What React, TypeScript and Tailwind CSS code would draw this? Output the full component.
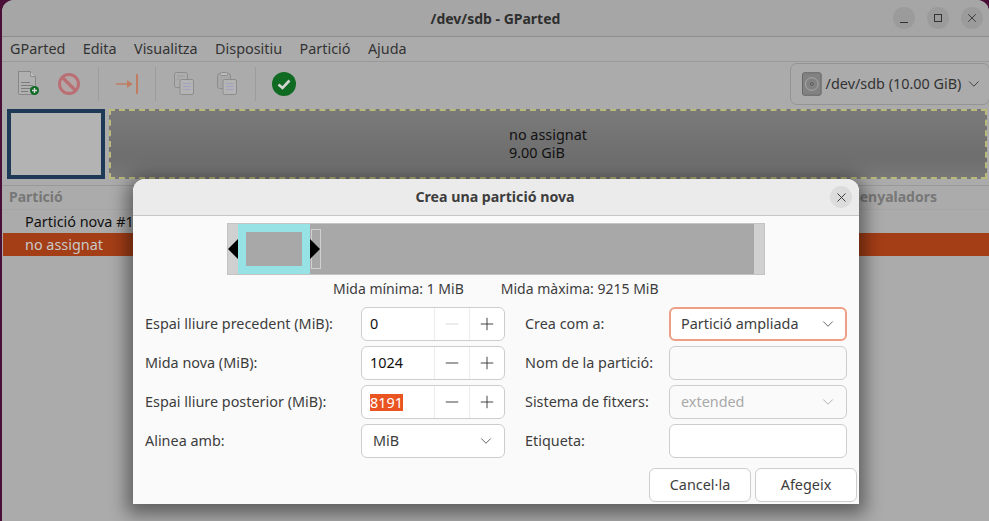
import { ChevronDown, Minus, Plus, X } from "lucide-react";

const font = { fontFamily: '"Noto Sans", sans-serif' };

function NewIcon() {
  return (
    <svg width="23" height="25" viewBox="0 0 23 25" fill="none">
      <path d="M1.5 0.5h12l5 5v17a1 1 0 0 1-1 1h-15a1 1 0 0 1-1-1v-21a1 1 0 0 1 1-1z" fill="#b0b0b0" stroke="#868686" />
      <path d="M13.5 0.5v5h5" fill="#c0c0c0" stroke="#8e8e8e" />
      <path d="M4 11.5h9M4 14.5h12M4 17.5h10M4 20.5h7" stroke="#7c7c7c" />
      <circle cx="17.5" cy="19.5" r="4.5" fill="#0f6b26" />
      <path d="M17.5 17v5M15 19.5h5" stroke="#d8d8d8" strokeWidth="1.4" />
    </svg>
  );
}

function StopIcon() {
  return (
    <svg width="22" height="22" viewBox="0 0 22 22" fill="none">
      <circle cx="11" cy="11" r="9.5" fill="#b3a6a6" stroke="#b96f73" strokeWidth="3" />
      <path d="M4.5 4.5l13 13" stroke="#b96f73" strokeWidth="3.2" />
    </svg>
  );
}

function MoveIcon() {
  return (
    <svg width="22" height="24" viewBox="0 0 22 24" fill="none">
      <path d="M0 12h16" stroke="#bf7d62" strokeWidth="1.6" />
      <path d="M11 8l5.5 4-5.5 4z" fill="#bf7d62" />
      <path d="M21 2v20" stroke="#bf7d62" strokeWidth="2" />
    </svg>
  );
}

function CopyIcon() {
  return (
    <svg width="20" height="23" viewBox="0 0 20 23" fill="none">
      <rect x="0.5" y="0.5" width="13" height="15" rx="2" fill="#adadad" stroke="#8c8c8c" />
      <path d="M3 4h8M3 7h3" stroke="#9a9a9a" />
      <rect x="6" y="7.5" width="13.5" height="15" rx="1.5" fill="#b4b4b4" stroke="#8c8c8c" />
      <path d="M9 11.5h8M9 14.5h8M9 17.5h8" stroke="#a0a0c0" />
    </svg>
  );
}

function PasteIcon() {
  return (
    <svg width="20" height="23" viewBox="0 0 20 23" fill="none">
      <rect x="0.5" y="1.5" width="13" height="15" rx="2" fill="#a8a8a8" stroke="#8c8c8c" />
      <rect x="3.5" y="0.5" width="7" height="3" rx="1" fill="#bcbcbc" stroke="#8c8c8c" />
      <rect x="6" y="7.5" width="13.5" height="15" rx="1.5" fill="#b4b4b4" stroke="#8c8c8c" />
      <path d="M9 11.5h8M9 14.5h8M9 17.5h8" stroke="#a0a0c0" />
    </svg>
  );
}

function ApplyIcon() {
  return (
    <svg width="24" height="24" viewBox="0 0 24 24" fill="none">
      <circle cx="12" cy="12" r="12" fill="#0f6a22" />
      <path d="M6.5 12.5l4 3.5 7-7.5" stroke="#d4d4d4" strokeWidth="2.6" />
    </svg>
  );
}

function DiskIcon() {
  return (
    <svg width="20" height="24" viewBox="0 0 20 24" fill="none">
      <rect x="0.5" y="0.5" width="19" height="23" rx="2" fill="#828282" stroke="#666" />
      <circle cx="10" cy="12" r="6.5" stroke="#a8a8a8" />
      <circle cx="10" cy="12" r="1.5" stroke="#5c5c5c" />
    </svg>
  );
}

function Sep() {
  return <div className="h-[34px] w-px bg-[#9c9c9c]" />;
}

function Spin({ value, selected, minusOff }: { value: string; selected?: boolean; minusOff?: boolean }) {
  return (
    <div className="flex h-[34px] w-[144px] items-stretch rounded-[6px] border border-[#cdcdcd] bg-white text-[#111]">
      <div className="flex flex-1 items-center pl-2">
        {selected ? <span className="bg-[#e95420] leading-[17px] text-white">{value}</span> : <span>{value}</span>}
      </div>
      <div className="flex w-[35px] items-center justify-center border-l border-[#ececec]">
        <Minus size={20} strokeWidth={1.1} className={minusOff ? "text-[#d4d4d4]" : "text-[#333]"} />
      </div>
      <div className="flex w-[35px] items-center justify-center border-l border-[#ececec]">
        <Plus size={20} strokeWidth={1.1} className="text-[#333]" />
      </div>
    </div>
  );
}

function Row({ label, children }: { label: string; children: React.ReactNode }) {
  return (
    <div className="flex h-[34px] items-center justify-between">
      <span className="text-[#3d3d3d]">{label}</span>
      {children}
    </div>
  );
}

function Picker({ text, focus, off, narrow }: { text: string; focus?: boolean; off?: boolean; narrow?: boolean }) {
  return (
    <div
      className={
        focus
          ? "flex h-[34px] w-[178px] items-center justify-between rounded-[6px] border-2 border-[#ee9e84] bg-white pl-[10px] pr-[8px] text-[#3d3d3d]"
          : off
            ? "flex h-[34px] w-[178px] items-center justify-between rounded-[6px] border border-[#cdcdcd] bg-[#fafafa] pl-[11px] pr-[9px] text-[#a9a9a9]"
            : narrow
              ? "flex h-[34px] w-[144px] items-center justify-between rounded-[6px] border border-[#cdcdcd] bg-white pl-[11px] pr-[9px] text-[#3d3d3d]"
              : "flex h-[34px] w-[178px] items-center justify-between rounded-[6px] border border-[#cdcdcd] bg-white pl-[11px] pr-[9px] text-[#3d3d3d]"
      }
    >
      {text}
      <ChevronDown size={18} strokeWidth={1.2} className={off ? "text-[#a9a9a9]" : "text-[#555]"} />
    </div>
  );
}

function Empty({ off }: { off?: boolean }) {
  return (
    <div
      className={
        off
          ? "h-[34px] w-[178px] rounded-[6px] border border-[#cdcdcd] bg-[#fafafa]"
          : "h-[34px] w-[178px] rounded-[6px] border border-[#cdcdcd] bg-white"
      }
    />
  );
}

function Dialog() {
  return (
    <div className="absolute left-[133px] top-[179px] flex h-[325px] w-[726px] flex-col overflow-hidden rounded-t-[12px] bg-[#fafafa] shadow-[0_4px_18px_6px_rgba(0,0,0,0.45)]">
      <div className="relative flex h-[37px] shrink-0 items-center justify-center border-b border-[#c6c6c6] bg-[#ebebeb]">
        <span className="ml-[-2px] text-[14.2px] font-bold text-[#3d3d3d]">Crea una partició nova</span>
        <div className="absolute right-[7px] top-[7px] flex h-[22px] w-[22px] items-center justify-center rounded-full bg-[#dcdcdc]">
          <X size={15} strokeWidth={1.5} className="text-[#333]" />
        </div>
      </div>
      <div className="pl-[94px] pt-[7px]">
        <svg width="538" height="52" viewBox="0 0 538 52">
          <rect x="0.5" y="0.5" width="537" height="51" fill="#d0d0d0" stroke="#c4c4c4" />
          <rect x="11" y="1" width="516" height="50" fill="#a8a8a8" />
          <rect x="11" y="1" width="72" height="50" fill="#97e2e4" />
          <rect x="19" y="9" width="56" height="34" fill="#a8a8a8" />
          <rect x="84.5" y="6.5" width="9" height="39" fill="none" stroke="#d0d0d0" />
          <path d="M1 26l10-10v20zM83 16l10 10-10 10z" fill="#000" />
        </svg>
      </div>
      <div className="flex h-[24px] items-end pl-[200px] text-[14px] text-[#3d3d3d]">
        <span>Mida mínima: 1 MiB</span>
        <span className="ml-[37px]">Mida màxima: 9215 MiB</span>
      </div>
      <div className="mt-[8px] flex pl-[12px] pr-[12px]">
        <div className="flex w-[360px] flex-col gap-[5px]">
          <Row label="Espai lliure precedent (MiB):">
            <Spin value="0" minusOff />
          </Row>
          <Row label="Mida nova (MiB):">
            <Spin value="1024" />
          </Row>
          <Row label="Espai lliure posterior (MiB):">
            <Spin value="8191" selected />
          </Row>
          <Row label="Alinea amb:">
            <Picker text="MiB" narrow />
          </Row>
        </div>
        <div className="ml-[20px] flex w-[322px] flex-col gap-[5px]">
          <Row label="Crea com a:">
            <Picker text="Partició ampliada" focus />
          </Row>
          <Row label="Nom de la partició:">
            <Empty off />
          </Row>
          <Row label="Sistema de fitxers:">
            <Picker text="extended" off />
          </Row>
          <Row label="Etiqueta:">
            <Empty />
          </Row>
        </div>
      </div>
      <div className="mt-[10px] flex justify-end gap-1 pr-[2px] text-[#3d3d3d]">
        <div className="flex h-[34px] w-[102px] items-center justify-center rounded-[6px] border border-[#cdcdcd] bg-white">Cancel·la</div>
        <div className="flex h-[34px] w-[102px] items-center justify-center rounded-[6px] border border-[#cdcdcd] bg-white">Afegeix</div>
      </div>
    </div>
  );
}

export default function App() {
  return (
    <div className="relative h-[521px] w-[989px] overflow-hidden bg-[#4a0f36] text-[14.4px]" style={font}>
      <div className="ml-[2px] flex h-[521px] w-[987px] flex-col overflow-hidden rounded-t-[12px] bg-[#ababab] text-[#333]">
        <div className="relative flex h-[37px] shrink-0 items-center justify-center border-b border-[#8d8d8d] bg-[#a6a6a6]">
          <span className="text-[14px] font-bold text-[#2e2e2e]">/dev/sdb - GParted</span>
          <div className="absolute right-[6px] top-[7px] flex gap-[12px]">
            <div className="flex h-[22px] w-[22px] items-center justify-center rounded-full bg-[#9b9b9b]">
              <div className="mt-[8px] h-px w-[8px] bg-[#333]" />
            </div>
            <div className="flex h-[22px] w-[22px] items-center justify-center rounded-full bg-[#9b9b9b]">
              <div className="h-[8px] w-[8px] border border-[#333]" />
            </div>
            <div className="flex h-[22px] w-[22px] items-center justify-center rounded-full bg-[#9b9b9b]">
              <X size={14} strokeWidth={1.5} />
            </div>
          </div>
        </div>
        <div className="flex h-[25px] shrink-0 items-center gap-[17.4px] border-b border-[#9a9a9a] pl-[8px]">
          <span>GParted</span>
          <span>Edita</span>
          <span>Visualitza</span>
          <span>Dispositiu</span>
          <span>Partició</span>
          <span>Ajuda</span>
        </div>
        <div className="flex h-[47px] shrink-0 items-center pb-[4px] pl-[15px]">
          <NewIcon />
          <div className="ml-[18px] flex">
            <StopIcon />
          </div>
          <div className="ml-[18px]">
            <Sep />
          </div>
          <div className="ml-[17px] flex">
            <MoveIcon />
          </div>
          <div className="ml-[17px]">
            <Sep />
          </div>
          <div className="ml-[18px] flex gap-[23px]">
            <CopyIcon />
            <PasteIcon />
          </div>
          <div className="ml-[18px]">
            <Sep />
          </div>
          <div className="ml-[16px] flex">
            <ApplyIcon />
          </div>
          <div className="ml-auto mr-[-1px] flex h-[42px] w-[200px] items-center gap-1 rounded-[7px] border border-[#949494] pl-[11px] pr-[6px]">
            <DiskIcon />
            <span className="whitespace-nowrap">/dev/sdb (10.00 GiB)</span>
            <ChevronDown size={18} strokeWidth={1.2} className="ml-auto" />
          </div>
        </div>
        <div className="flex h-[70px] shrink-0 gap-[4px] pl-[5px] pr-[2px]">
          <div className="h-[70px] w-[98px] border-[4px] border-[#1e3a56] bg-[#b3b3b3]" />
          <div className="flex flex-1 flex-col items-center justify-center border-2 border-dashed border-[#b9b97a] bg-[linear-gradient(#7a7a7a,#6e6e6e_70%,#777)] text-[#111]">
            <div className="leading-[18px]">
              <div>no assignat</div>
              <div>9.00 GiB</div>
            </div>
          </div>
        </div>
        <div className="mt-[6px] flex h-[25px] shrink-0 items-center justify-between border-y border-y-[#999] border-b-[#a5a5a5] pb-[3px] pl-[7px] pr-[52px] text-[14px] font-bold text-[#777]">
          <span>Partició</span>
          <span>Senyaladors</span>
        </div>
        <div className="flex h-[23px] shrink-0 items-center pl-[23px] text-[#111]">Partició nova #1</div>
        <div className="ml-px flex h-[23px] shrink-0 items-center bg-[#a43e17] pl-[22px] text-[#c9c9c9]">no assignat</div>
      </div>
      <Dialog />
    </div>
  );
}
